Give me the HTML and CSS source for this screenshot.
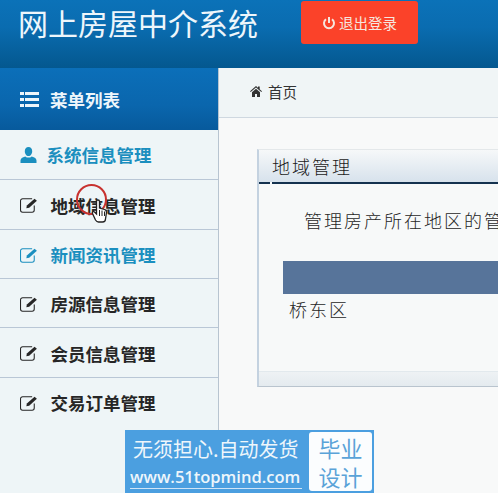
FILE: index.html
```html
<!DOCTYPE html>
<html lang="zh-CN">
<head>
    <meta charset="UTF-8">
    <title>网上房屋中介系统</title>
    <link rel="stylesheet" href="styles.css">
</head>
<body>
    <div class="page">
        <header class="topbar">
            <h1 class="brand">网上房屋中介系统</h1>
            <a class="logout-btn">
                <svg class="icon-power" viewBox="0 0 14 14"><path d="M4 3.2a5 5 0 1 0 6 0" fill="none" stroke="#f6e6df" stroke-width="2"/><path d="M7 1v6" stroke="#f6e6df" stroke-width="2"/></svg>
                退出登录
            </a>
        </header>
        <div class="main">
            <aside class="sidebar">
                <div class="menu-title">
                    <svg class="icon-list" viewBox="0 0 19 15"><path d="M0 0h4v3H0zM5 0h14v3H5zM0 6h4v3H0zM5 6h14v3H5zM0 12h4v3H0zM5 12h14v3H5z" fill="#eef6fb"/></svg>
                    菜单列表
                </div>
                <ul class="menu">
                    <li class="menu-item first active">
                        <svg class="icon-user" viewBox="0 0 16 16"><path d="M8 0c2.400 0 3.700 1.800 3.700 4.200S10.300 9 8 9 4.300 6.600 4.300 4.200 5.600 0 8 0zM0 16v-2.600c0-1.800 1.800-3.400 4.800-4 .9.800 2 1.200 3.200 1.200s2.300-.4 3.200-1.200c3 .6 4.800 2.200 4.800 4V16z" fill="currentColor"/></svg>
                        系统信息管理
                    </li>
                    <li class="menu-item tall">
                        <svg class="icon-edit" viewBox="0 0 18 15"><use href="#edit"/></svg>
                        地域信息管理
                    </li>
                    <li class="menu-item active">
                        <svg class="icon-edit" viewBox="0 0 18 15"><use href="#edit"/></svg>
                        新闻资讯管理
                    </li>
                    <li class="menu-item">
                        <svg class="icon-edit" viewBox="0 0 18 15"><use href="#edit"/></svg>
                        房源信息管理
                    </li>
                    <li class="menu-item tall">
                        <svg class="icon-edit" viewBox="0 0 18 15"><use href="#edit"/></svg>
                        会员信息管理
                    </li>
                    <li class="menu-item last">
                        <svg class="icon-edit" viewBox="0 0 18 15"><use href="#edit"/></svg>
                        交易订单管理
                    </li>
                </ul>
            </aside>
            <section class="content">
                <div class="crumb">
                    <svg class="icon-home" viewBox="0 0 12 11"><path d="M6 0l2 1.700V.6h1.700v2.600L12 5.300l-.7.800L6 1.500.7 6.100 0 5.300zM2 6.200L6 2.800l4 3.400V11H7V8H5v3H2z" fill="#333"/></svg>
                    首页
                </div>
                <div class="panel">
                    <div class="panel-head">地域管理</div>
                    <div class="panel-rule"><span></span></div>
                    <div class="panel-body">
                        <p class="panel-desc">管理房产所在地区的管</p>
                        <div class="table-head"></div>
                        <div class="table-cell">桥东区</div>
                    </div>
                    <div class="panel-foot"></div>
                </div>
            </section>
        </div>

        <!-- shapes for the edit icon -->
        <svg class="defs" width="0" height="0">
            <symbol id="edit" viewBox="0 0 18 15">
                <path d="M13.500 8v4.300a2 2 0 0 1-2 2H2.500a2 2 0 0 1-2-2V3.500a2 2 0 0 1 2-2h9" fill="none" stroke="currentColor" stroke-width="1"/>
                <path d="M6 10.500l.5-2.500L13.800 1.500l2.200 2-7.300 6.500z" fill="currentColor"/>
            </symbol>
        </svg>

        <!-- demo cursor over the second item -->
        <div class="click-ring"></div>
        <svg class="hand" viewBox="0 0 16 24"><path d="M5 2.500c0-2 3-2 3 0V9l5 1.500c1.500.5 2 1.500 2 3L14 20c0 1.500-1 3-3 3H7c-1.500 0-2.200-.8-3-2L1 14.500c-.6-1.500 1-2.500 2-1.500l2 2z" fill="#fff" stroke="#222" stroke-width="1.300"/><path d="M8 11v6M10.500 11.500V17M13 12.500V17" stroke="#222" stroke-width="1"/></svg>

        <!-- promo strip pinned over the page bottom -->
        <div class="promo">
            <div class="promo-text">
                <div class="promo-line">无须担心.自动发货</div>
                <div class="promo-url">www.51topmind.com</div>
            </div>
            <div class="promo-badge">毕业<br>设计</div>
        </div>
    </div>
</body>
</html>
```

FILE: styles.css
```css
* {
    box-sizing: border-box;
}

body {
    margin: 0;
    font-family: "Noto Sans CJK SC", "Liberation Sans", sans-serif;
    color: #222;
    background: #f8f9f9;
}

.page {
    position: relative;
    width: 498px;
    height: 493px;
    overflow: hidden;
    display: flex;
    flex-direction: column;
}

.topbar {
    height: 68px;
    flex: none;
    display: flex;
    align-items: flex-start;
    padding-left: 18px;
    background: linear-gradient(180deg, #0b72b8 0%, #0a6cb0 40%, #04588f 100%);
}

.brand {
    margin: 1px 0 0;
    font-size: 30px;
    line-height: 42px;
    font-weight: 400;
    color: #eef6fb;
    white-space: nowrap;
}

.logout-btn {
    margin: 1px 0 0 43px;
    width: 117px;
    height: 43px;
    display: flex;
    align-items: center;
    justify-content: center;
    gap: 3px;
    border-radius: 3px;
    background: #fb4229;
    color: #f6e6df;
    font-size: 14.5px;
}

.icon-power {
    width: 14px;
    height: 14px;
}

.main {
    flex: 1;
    display: flex;
    min-height: 0;
}

.sidebar {
    width: 219px;
    flex: none;
    background: #eef5f7;
    border-right: 1px solid #b7c4d0;
}

.menu-title {
    height: 62px;
    display: flex;
    align-items: center;
    gap: 11px;
    padding-left: 20px;
    background: linear-gradient(180deg, #0b6fb9 0%, #0a66ad 60%, #075a9c 100%);
    color: #eef6fb;
    font-size: 17.5px;
    font-weight: 700;
}

.icon-list {
    width: 19px;
    height: 15px;
}

.menu {
    list-style: none;
    margin: 0;
    padding: 0;
}

.menu-item {
    height: 49px;
    display: flex;
    align-items: center;
    gap: 11.500px;
    padding-left: 20px;
    padding-top: 1px;
    border-bottom: 1px solid #b9c7d6;
    color: #262626;
    font-size: 17.5px;
    font-weight: 700;
}

.menu-item.tall {
    height: 50px;
}

.menu-item.first {
    height: 50px;
    gap: 9.500px;
    padding-top: 0;
}

.menu-item.last {
    border-bottom: none;
    padding-top: 0;
}

.menu-item.active {
    color: #1b8fbf;
}

.icon-user {
    width: 17px;
    height: 16px;
}

.icon-edit {
    width: 19px;
    height: 16px;
}

.defs {
    position: absolute;
}

.content {
    flex: 1;
    min-width: 0;
}

.crumb {
    height: 50px;
    display: flex;
    align-items: center;
    gap: 6px;
    padding-left: 31px;
    padding-bottom: 2px;
    background: #f0f5f6;
    border-bottom: 1px solid #cfd8e0;
    font-size: 14.5px;
    color: #333;
}

.icon-home {
    width: 12px;
    height: 11px;
}

.panel {
    width: 420px;
    margin: 31px 0 0 38px;
    height: 238px;
    background: #f7f9f9;
    border: 1px solid #b9c4ce;
    border-left: 2px solid #c4d2e0;
    border-top-color: #e4e8ea;
    display: flex;
    flex-direction: column;
}

.panel-head {
    height: 32px;
    padding-left: 13px;
    font-size: 18px;
    line-height: 32px;
    font-weight: 300;
    letter-spacing: 2px;
    background: linear-gradient(180deg, #f6f8f9 0%, #d7e2ec 100%);
    color: #1a1a1a;
}

.panel-rule {
    height: 2px;
    flex: none;
    background: #14324f;
}

.panel-rule span {
    display: block;
    width: 2px;
    height: 2px;
    margin-left: 11px;
    background: #f7f9f9;
}

.panel-body {
    flex: 1;
    padding-left: 24px;
}

.panel-desc {
    margin: 24px 0 0 21px;
    font-size: 18px;
    line-height: 24px;
    font-weight: 300;
    letter-spacing: 2px;
    white-space: nowrap;
    color: #262626;
}

.table-head {
    height: 33px;
    margin-top: 29px;
    background: #57749a;
}

.table-cell {
    padding-left: 6px;
    margin-top: 3px;
    font-size: 18px;
    line-height: 24px;
    font-weight: 300;
    letter-spacing: 2px;
    color: #262626;
}

.panel-foot {
    height: 15px;
    flex: none;
    background: linear-gradient(180deg, #eef2f4 0%, #e4ebef 100%);
    border-top: 1px solid #e2e9ed;
}

.click-ring {
    position: absolute;
    left: 76px;
    top: 184px;
    width: 31px;
    height: 31px;
    border-radius: 50%;
    border: 2px solid #c8322f;
}

.hand {
    position: absolute;
    left: 91px;
    top: 199px;
    width: 17px;
    height: 24px;
}

.promo {
    position: absolute;
    left: 125px;
    top: 430px;
    width: 249px;
    height: 63px;
    display: flex;
    padding: 2px;
    background: #4b9fe0;
}

.promo-text {
    flex: 1;
    padding-left: 3px;
    color: #eef6fb;
    white-space: nowrap;
}

.promo-line {
    font-size: 20px;
    line-height: 34px;
    padding-left: 3px;
    font-weight: 400;
}

.promo-url {
    font-family: "Open Sans", "Liberation Sans", sans-serif;
    font-size: 16.500px;
    line-height: 22px;
    font-weight: 600;
    border-bottom: 1px solid #cfe4f6;
    width: 172px;
}

.promo-badge {
    width: 63px;
    flex: none;
    border-radius: 3px;
    background: #fbfdfe;
    color: #5aa3d8;
    text-align: center;
    font-size: 22px;
    line-height: 29px;
    padding-top: 1px;
}
```
